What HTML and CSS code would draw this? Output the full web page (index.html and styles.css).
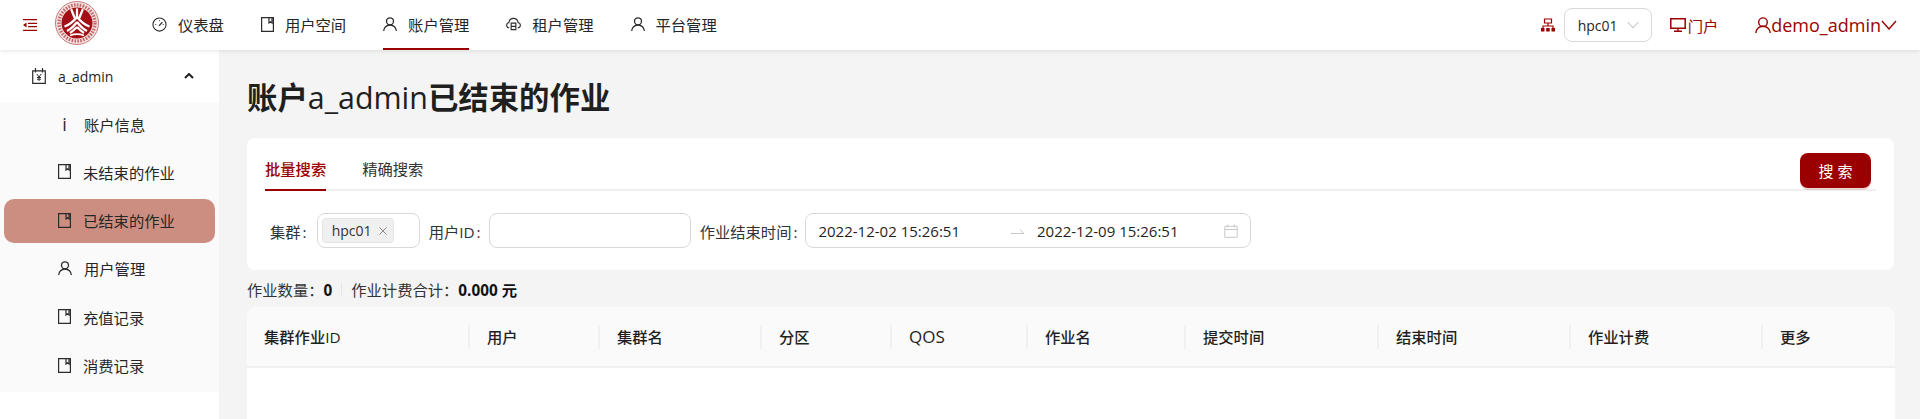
FILE: index.html
```html
<!DOCTYPE html>
<html lang="zh-CN">
<head>
<meta charset="utf-8">
<title>已结束的作业</title>
<link rel="stylesheet" href="styles.css">
</head>
<body>
<svg class="defs" width="0" height="0">
  <symbol id="i-book" viewBox="0 0 13 15"><path d="M.6.600h11.800v13.800H.6zM8 .6v5.400l1.500-1.200L11 6V.6" fill="none" stroke="currentColor" stroke-width="1.200"/></symbol>
  <symbol id="i-user" viewBox="0 0 14 14"><circle cx="7" cy="4.300" r="3.500" fill="none" stroke="currentColor" stroke-width="1.300"/><path d="M.7 14c0-3.400 2.800-6 6.300-6s6.300 2.600 6.300 6" fill="none" stroke="currentColor" stroke-width="1.300"/></symbol>
</svg>
<header class="topbar">
  <svg class="fold" viewBox="0 0 14 12" width="14" height="12"><path d="M0 .6h14M5 4.300h9M5 7.700h9M0 11.400h14" stroke="#9b0000" stroke-width="1.200"/><path d="M3.500 3.500v5L0 6z" fill="#9b0000"/></svg>
  <svg class="logo" viewBox="0 0 44 44" width="44" height="44">
    <circle cx="22" cy="22" r="21.500" fill="#f7e4e4" stroke="#c67a7a" stroke-width="1"/>
    <circle cx="22" cy="22" r="18" fill="none" stroke="#b04040" stroke-width="3.400" stroke-dasharray="1.600 1.300" opacity=".75"/>
    <circle cx="22" cy="22" r="15.500" fill="#a30f14"/>
    <path d="M16.500 9l3 7.500M27.500 9l-3 7.500M22 8.500V17" fill="none" stroke="#fff" stroke-width="2.300" stroke-linecap="round"/>
    <path d="M22 16C18 21 14 24 9.500 25.500M22 16c4 5 8 8 12.500 9.500M22 21c-3 4-6 7-10 9M22 21c3 4 6 7 10 9M22 26c-2 2-4 4-7 6M22 26c2 2 4 4 7 6" fill="none" stroke="#fff" stroke-width="2.300"/>
    <path d="M15 34.500c4-1.500 10-1.500 14 0" fill="none" stroke="#fff" stroke-width="1.800"/>
  </svg>
  <nav class="mainnav">
    <a class="navitem">
      <svg class="ic" viewBox="0 0 16 16" width="15" height="15"><circle cx="8" cy="8" r="7" fill="none" stroke="currentColor" stroke-width="1.200"/><path d="M7.500 9.500l3.500-4" stroke="currentColor" stroke-width="1.400"/><path d="M3.500 8h1M8 3.500v1M11.500 8h1" stroke="currentColor"/></svg>
      <span>仪表盘</span></a>
    <a class="navitem"><svg class="ic" width="13" height="15"><use href="#i-book"/></svg><span>用户空间</span></a>
    <a class="navitem active"><svg class="ic" width="14" height="14"><use href="#i-user"/></svg><span>账户管理</span></a>
    <a class="navitem">
      <svg class="ic" viewBox="0 0 16 14" width="15" height="14"><path d="M3.500 11C1.800 11 .7 9.800.7 8.300S1.800 5.700 3 5.600C3.400 3 5.500 1 8 1s4.600 2 5 4.600c1.200.1 2.300 1.200 2.300 2.700S14.200 11 12.500 11" fill="none" stroke="currentColor" stroke-width="1.200"/><path d="M5.500 6h5v7h-5zM5.500 9.500h5" fill="none" stroke="currentColor" stroke-width="1.200"/></svg>
      <span>租户管理</span></a>
    <a class="navitem"><svg class="ic" width="14" height="14"><use href="#i-user"/></svg><span>平台管理</span></a>
  </nav>
  <div class="topright">
    <svg class="cluster" viewBox="0 0 14 14" width="14" height="14"><path d="M3.500 1h7v4h-7zM7 5v3M2 10V8h10v2" fill="none" stroke="#9b0000" stroke-width="1.200"/><path d="M0 10h3.500v3.500H0zM5.200 10h3.500v3.500H5.200zM10.500 10H14v3.500h-3.500z" fill="#9b0000"/></svg>
    <div class="clusterselect"><span>hpc01</span>
      <svg viewBox="0 0 12 8" width="12" height="8"><path d="M.7 1l5.300 5.800L11.300 1" fill="none" stroke="#c4c4c4" stroke-width="1.100"/></svg>
    </div>
    <a class="portal">
      <svg viewBox="0 0 16 14" width="16" height="14"><path d="M.8.800h14.400v9.400H.8z" fill="none" stroke="#9b0000" stroke-width="1.500"/><path d="M8 10v3M4 13.300h8" stroke="#9b0000" stroke-width="1.400"/></svg>
      <span>门户</span></a>
    <a class="account">
      <svg viewBox="0 0 16 16" width="16" height="16"><circle cx="8" cy="5.200" r="4.300" fill="none" stroke="#9b0000" stroke-width="1.400"/><path d="M.8 16c0-3.800 3.200-6.700 7.200-6.700s7.200 2.900 7.200 6.700" fill="none" stroke="#9b0000" stroke-width="1.400"/></svg>
      <span>demo_admin</span>
      <svg viewBox="0 0 16 10" width="16" height="10"><path d="M1 1l7 8 7-8" fill="none" stroke="#9b0000" stroke-width="1.400"/></svg>
    </a>
  </div>
</header>
<div class="body">
  <aside class="sidebar">
    <div class="group">
      <svg class="ic" viewBox="0 0 14 16" width="14" height="16"><path d="M.7 2.800h12.600v12.500H.7zM3.500 0v4.500M10.500 0v4.500" fill="none" stroke="currentColor" stroke-width="1.200"/><path d="M4.800 6l2.200 3 2.200-3M7 9v4M5 9.500h4M5 11.200h4" fill="none" stroke="currentColor"/></svg>
      <span class="grouplabel">a_admin</span>
      <svg class="caret" viewBox="0 0 10 6" width="10" height="6"><path d="M1 5l4-4 4 4" fill="none" stroke="#1f1f1f" stroke-width="2"/></svg>
    </div>
    <ul class="submenu">
      <li class="subitem"><span class="subicon info">i</span><span>账户信息</span></li>
      <li class="subitem"><svg class="subicon" width="13" height="15"><use href="#i-book"/></svg><span>未结束的作业</span></li>
      <li class="subitem selected"><svg class="subicon" width="13" height="15"><use href="#i-book"/></svg><span>已结束的作业</span></li>
      <li class="subitem"><svg class="subicon" width="14" height="14"><use href="#i-user"/></svg><span>用户管理</span></li>
      <li class="subitem"><svg class="subicon" width="13" height="15"><use href="#i-book"/></svg><span>充值记录</span></li>
      <li class="subitem"><svg class="subicon" width="13" height="15"><use href="#i-book"/></svg><span>消费记录</span></li>
    </ul>
  </aside>
  <main class="content">
    <h1 class="title">账户<span class="thin">a_admin</span>已结束的作业</h1>
    <section class="card">
      <div class="tabs">
        <a class="tab current">批量搜索</a>
        <a class="tab">精确搜索</a>
        <button class="search">搜 索</button>
      </div>
      <div class="filters">
        <label class="flabel first">集群</label>
        <div class="field multi"><span class="tag">hpc01<svg viewBox="0 0 8 8" width="8" height="8"><path d="M.5.500l7 7M7.500.500l-7 7" stroke="#8c8c8c"/></svg></span></div>
        <label class="flabel">用户ID</label>
        <div class="field userid"></div>
        <label class="flabel">作业结束时间</label>
        <div class="field range">
          <span class="date">2022-12-02 15:26:51</span>
          <svg class="arrow" viewBox="0 0 14 6" width="14" height="6"><path d="M0 5.500h13L9 1.500" fill="none" stroke="#c8c8c8"/></svg>
          <span class="date">2022-12-09 15:26:51</span>
          <svg class="cal" viewBox="0 0 14 14" width="14" height="14"><path d="M.8 2.300h12.400v11H.8zM.8 5.500h12.400M3.800.5v3M10.200.5v3" fill="none" stroke="#c8c8c8"/></svg>
        </div>
      </div>
    </section>
    <div class="summary">
      <span>作业数量：<b>0</b></span><i class="vsep"></i><span>作业计费合计：<b>0.000 元</b></span>
    </div>
    <section class="table">
      <div class="thead">
        <div class="th">集群作业ID</div>
        <div class="th">用户</div>
        <div class="th">集群名</div>
        <div class="th">分区</div>
        <div class="th latin">QOS</div>
        <div class="th">作业名</div>
        <div class="th">提交时间</div>
        <div class="th">结束时间</div>
        <div class="th">作业计费</div>
        <div class="th">更多</div>
      </div>
    </section>
  </main>
</div>
</body>
</html>
```
FILE: styles.css
```css
* { box-sizing: border-box; }
html, body { margin: 0; padding: 0; height: 419px; overflow: hidden; }
body {
  font-family: "Open Sans", "Noto Sans CJK SC", sans-serif;
  font-size: 15.3px;
  color: #1f1f1f;
  background: #f4f4f4;
}
.defs { position: absolute; }
.topbar {
  height: 50px;
  background: #fff;
  display: flex;
  align-items: center;
  padding-left: 23px;
  box-shadow: 0 1px 4px rgba(0,0,0,.1);
  position: relative;
  z-index: 2;
}
.fold { margin-right: 18px; flex: none; }
.logo { margin-right: 53px; margin-top: -4px; flex: none; }
.mainnav { display: flex; height: 100%; gap: 37px; }
.navitem {
  display: flex;
  align-items: center;
  gap: 11px;
  height: 100%;
  border-bottom: 2px solid transparent;
  color: #262626;
}
.navitem.active { border-bottom-color: #9b0000; }
.ic { flex: none; color: #2c2c2c; }
.topright { margin-left: auto; display: flex; align-items: center; color: #9b0000; padding-right: 23px; }
.cluster { margin-right: 9px; }
.clusterselect {
  width: 88px; height: 34px;
  border: 1px solid #d9d9d9; border-radius: 8px;
  display: flex; align-items: center; justify-content: space-between;
  padding: 0 12px 0 13px;
  color: #1f1f1f;
  font-size: 14px;
  margin-right: 18px;
}
.portal { display: flex; align-items: center; gap: 2px; margin-right: 37px; }
.account { display: flex; align-items: center; font-size: 18px; }
.body { display: flex; height: 369px; }
.sidebar { width: 219px; background: #fff; flex: none; }
.group { height: 52px; display: flex; align-items: center; padding-left: 32px; }
.grouplabel { margin-left: 12px; font-size: 14px; }
.caret { margin-left: auto; margin-right: 25px; }
.submenu { margin: 0; padding: 0; list-style: none; background: #fafafa; height: 290px; }
.subitem {
  height: 44px;
  margin: 0 4px 4.330px;
  padding: 0 0 1px 54px;
  border-radius: 10px;
  display: flex;
  align-items: center;
  color: #262626;
}
.subitem.selected { background: #cd8e82; }
.subicon { flex: none; color: #2c2c2c; margin-right: 12px; }
.info { width: 13px; text-align: center; font-size: 18px; line-height: 1; margin-right: 13px; }
.content { flex: 1; padding: 0 26px 0 28px; min-width: 0; }
.title { margin: 28px 0 20px; font-size: 30.4px; line-height: 40px; font-weight: 700; color: #1f1f1f; }
.thin { font-weight: 400; }
.card { background: #fff; border-radius: 8px; height: 132px; padding: 0 18px; }
.tabs { display: flex; height: 53px; border-bottom: 2px solid #f0f0f0; align-items: flex-end; gap: 36px; position: relative; }
.tab { height: 53px; display: flex; align-items: center; padding-top: 9px; border-bottom: 2px solid transparent; margin-bottom: -2px; color: #333; }
.tab.current { color: #9b0000; font-weight: 500; border-bottom-color: #9b0000; }
.search {
  margin-left: auto; margin-right: 5px; margin-bottom: 1px;
  width: 71px; height: 35px;
  background: #9b0000; color: #fff;
  border: 0; border-radius: 8px;
  font: inherit; font-size: 15px;
  box-shadow: 0 2px 0 rgba(155,0,0,.15);
  align-self: flex-end;
}
.filters { display: flex; align-items: center; margin-top: 22px; padding-left: 5px; }
.flabel { white-space: nowrap; color: #333; margin-left: 9px; }
.flabel.first { margin-left: 0; margin-right: 2px; }
.flabel::after { content: ":"; margin: 0 8px 0 2px; }
.field { height: 35px; border: 1px solid #d9d9d9; border-radius: 8px; display: flex; align-items: center; background: #fff; flex: none; }
.multi { width: 103px; padding-left: 4px; }
.tag { display: flex; align-items: center; gap: 7px; background: #f0f0f0; border: 1px solid #e4e4e4; border-radius: 4px; height: 25px; padding: 0 6px 0 9px; font-size: 14px; color: #333; }
.userid { width: 202px; }
.range { width: 446px; padding: 0 12px; font-size: 15px; }
.arrow { margin: 0 12px 0 51px; flex: none; }
.cal { margin-left: auto; }
.summary { display: flex; align-items: center; height: 36px; margin-top: 1px; color: #333; }
.summary b { color: #111; font-weight: 700; }
.vsep { display: block; width: 1px; height: 14px; background: #e6e6e6; margin: 0 9px; }
.table { background: #fff; border-radius: 10px 10px 0 0; height: 120px; margin-right: -1px; }
.thead {
  display: grid;
  grid-template-columns: 223px 130px 162px 130px 136px 158px 193px 192px 192px 1fr;
  height: 61px;
  background: #fafafa;
  border-bottom: 2px solid #f0f0f0;
  border-radius: 10px 10px 0 0;
  align-items: center;
}
.th { padding-left: 17px; height: 24px; line-height: 24px; font-weight: 500; color: #1f1f1f; border-right: 2px solid #f0f0f0; }
.th:last-child { border-right: 0; }
.th.latin { font-weight: 400; font-size: 17px; }
```
